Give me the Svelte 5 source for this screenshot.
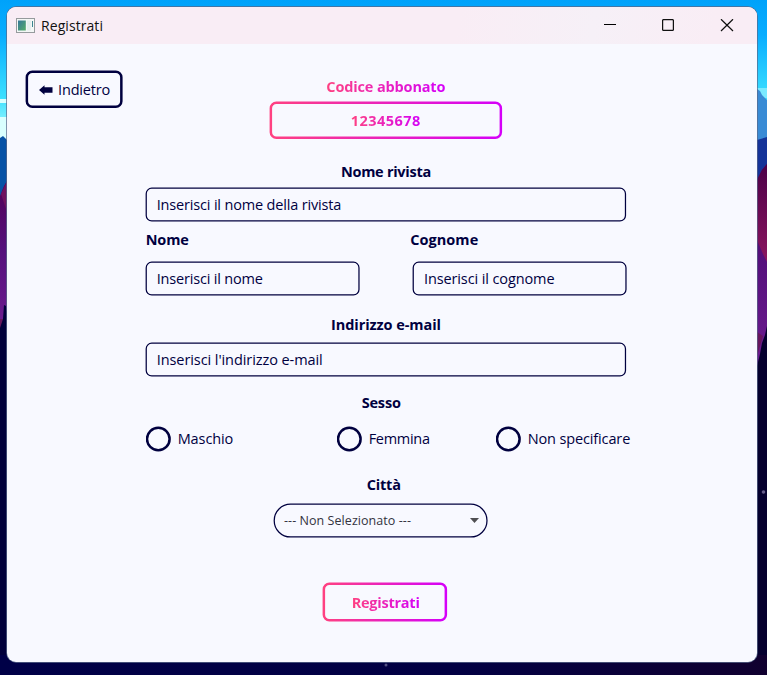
<script>
  const genders = [
    { label: 'Maschio', width: 191, text: 55.5 },
    { label: 'Femmina', width: 159, text: 61 },
    { label: 'Non specificare', width: 136, text: 102.5 }
  ];
  let gender = $state('');

  function fit(node, width) {
    const natural = node.getBoundingClientRect().width;
    const count = node.textContent.length;
    node.style.letterSpacing = `${(width - natural) / count}px`;
  }
</script>

{#snippet frame(w, h, r, s, gradient)}
  <svg class="frame" width={w} height={h} aria-hidden="true">
    {#if gradient}
      <defs>
        <linearGradient id="edge{w}" x1="0" x2="1">
          <stop offset="0" stop-color="#ff4181" />
          <stop offset="1" stop-color="#d500f9" />
        </linearGradient>
      </defs>
    {/if}
    <rect x={s / 2 - 0.4} y={s / 2 - 0.4} width={w - s} height={h - s} rx={r} fill="none"
      stroke={gradient ? `url(#edge${w})` : '#00003f'} stroke-width={s} />
  </svg>
{/snippet}

<div class="desktop">
  <svg class="scenery" width="767" height="675" aria-hidden="true">
    <defs>
      <linearGradient id="sky" x1="0" x2="0" y1="0" y2="1">
        <stop offset="0" stop-color="#00a2fa" />
        <stop offset=".25" stop-color="#08adff" />
        <stop offset=".7" stop-color="#3ce0ff" />
        <stop offset="1" stop-color="#b8ffff" />
      </linearGradient>
      <linearGradient id="violet" x1="0" x2="0" y1="0" y2="1">
        <stop offset="0" stop-color="#520057" />
        <stop offset=".45" stop-color="#55107c" />
        <stop offset="1" stop-color="#701d91" />
      </linearGradient>
      <linearGradient id="ridge" x1="0" x2="0" y1="0" y2="1">
        <stop offset="0" stop-color="#4c0048" />
        <stop offset="1" stop-color="#8b165f" />
      </linearGradient>
      <linearGradient id="night" x1="0" x2="1">
        <stop offset="0" stop-color="#000047" />
        <stop offset=".6" stop-color="#020043" />
        <stop offset="1" stop-color="#10002f" />
      </linearGradient>
    </defs>
    <rect width="767" height="140" fill="url(#sky)" />
    <path d="M0 99H7V103H0ZM0 117H7V140H0Z" fill="#d9ffff" />
    <path d="M757 88H767V98H757Z" fill="#7beaff" />
    <path d="M0 138L3 136L7 140V210H0Z" fill="#0752a6" />
    <path d="M757 89L760 91L762 95L767 100V145H757Z" fill="#398bd5" />
    <path d="M757 140L767 137V185H757Z" fill="#153398" />
    <path d="M0 196L4 186L7 181V335H0Z" fill="url(#violet)" />
    <path d="M1 194L7 181V212Z" fill="#6f1260" />
    <path d="M757 180L762 170L767 164V375H757Z" fill="url(#violet)" />
    <path d="M757 180L762 170L767 164V262L763 254L757 240Z" fill="url(#ridge)" />
    <path d="M0 319H3L2 328H0ZM757 332L763 336L757 356Z" fill="#67165d" />
    <path d="M0 328L3 319L4 305L6 306L7 312V675H0Z" fill="#01003b" />
    <path d="M757 366L760 354L762 343L765 335L767 326V675H757Z" fill="#05002e" />
    <rect y="655" width="767" height="20" fill="url(#night)" />
    <circle cx="763.5" cy="492" r="1.8" fill="#655c89" />
    <circle cx="386" cy="665" r="1.5" fill="#535184" />
  </svg>

  <main class="window">
    <header class="titlebar">
      <svg class="app-icon" width="19" height="16" viewBox="0 0 19 16">
        <defs>
          <linearGradient id="pane" x1="0" y1="0" x2="1" y2="1">
            <stop offset="0" stop-color="#35779a" />
            <stop offset="1" stop-color="#55ad69" />
          </linearGradient>
        </defs>
        <rect x=".5" y=".5" width="18" height="14" fill="#f4f7f6" stroke="#969b9d" />
        <rect x="2" y="2.5" width="7.8" height="10" fill="url(#pane)" />
        <rect x="11" y="2.5" width="4" height="10" fill="#e6eeee" />
        <path d="M16.5 3V9" stroke="#3a8590" />
      </svg>
      <h1><span use:fit={62}>Registrati</span></h1>
      <div class="controls">
        <svg width="14" height="14" viewBox="0 0 14 14"><path d="M1 5.5H13" stroke="#000" /></svg>
        <svg width="14" height="14" viewBox="0 0 14 14"><rect x="1.6" y=".6" width="10.8" height="10.8" rx="1" fill="none" stroke="#111" stroke-width="1.25" /></svg>
        <svg width="14" height="14" viewBox="0 0 14 14"><path d="M1 .2L13 12M13 .2L1 12" fill="none" stroke="#111" stroke-width="1.2" /></svg>
      </div>
    </header>

    <div class="top">
      <button class="back">
        {@render frame(97, 37.5, 5.5, 2.5, false)}
        <svg width="14" height="10" viewBox="0 0 14 10"><path d="M0 5L5.5 .3V2.3H13.5V7.7H5.5V9.7Z" fill="#00003f" /></svg>
        <span use:fit={52}>Indietro</span>
      </button>
      <section class="code">
        <div class="label"><b class="glow" use:fit={119}>Codice abbonato</b></div>
        <div class="codebox">
          {@render frame(232.5, 37.5, 5.5, 2.5, true)}
          <b class="glow" use:fit={70}>12345678</b>
        </div>
      </section>
    </div>

    <form onsubmit={(e) => e.preventDefault()}>
      <div class="label magazine"><b use:fit={90}>Nome rivista</b></div>
      <div class="input">
        {@render frame(480.5, 34, 5.5, 1.25, false)}
        <span use:fit={184.5}>Inserisci il nome della rivista</span>
      </div>
      <div class="names">
        <div class="first">
          <div class="label"><b use:fit={43}>Nome</b></div>
          <div class="input">
            {@render frame(214, 34, 5.5, 1.25, false)}
            <span use:fit={106}>Inserisci il nome</span>
          </div>
        </div>
        <div class="last">
          <div class="label"><b use:fit={68}>Cognome</b></div>
          <div class="input">
            {@render frame(214, 34, 5.5, 1.25, false)}
            <span use:fit={130.5}>Inserisci il cognome</span>
          </div>
        </div>
      </div>
      <div class="label mail"><b use:fit={110}>Indirizzo e-mail</b></div>
      <div class="input">
        {@render frame(480.5, 34, 5.5, 1.25, false)}
        <span use:fit={166}>Inserisci l'indirizzo e-mail</span>
      </div>
      <div class="label sex"><b use:fit={39}>Sesso</b></div>
      <div class="radios">
        {#each genders as g}
          <label style="width:{g.width}px">
            <input type="radio" name="gender" value={g.label} bind:group={gender} />
            <svg width="26" height="26"><circle cx="12.3" cy="13" r="11.3" fill="none" stroke="#00003f" stroke-width="2.5" />{#if gender === g.label}<circle cx="12.3" cy="13" r="5.5" fill="#00003f" />{/if}</svg>
            <span use:fit={g.text}>{g.label}</span>
          </label>
        {/each}
      </div>
      <div class="label city"><b use:fit={34}>Città</b></div>
      <div class="select">
        {@render frame(214, 34, 16.3, 1.25, false)}
        <span use:fit={127}>--- Non Selezionato ---</span>
        <svg width="9" height="5"><path d="M0 0H9L4.5 5Z" fill="#4f4f52" /></svg>
      </div>
      <button class="submit">
        {@render frame(124.5, 39, 5.5, 2.5, true)}
        <b class="glow" use:fit={68}>Registrati</b>
      </button>
    </form>
  </main>
</div>

<style>
  :global(body) { margin: 0; }
  .desktop {
    position: relative;
    box-sizing: border-box;
    width: 767px;
    height: 675px;
    padding: 7px 10px 13px 7px;
    overflow: hidden;
    background: #01003b;
    font-family: "Open Sans", "Noto Sans", sans-serif;
    font-size: 14.5px;
    line-height: 20px;
    color: #00003f;
  }
  .scenery { position: absolute; inset: 0; }
  .window {
    position: relative;
    height: 655px;
    border-radius: 9px;
    overflow: hidden;
    background: #f8f9ff;
    box-shadow: 0 0 0 .7px #59678a;
  }
  .titlebar {
    display: flex;
    align-items: center;
    height: 37px;
    padding-left: 9px;
    background: linear-gradient(100deg, #f9edf5 0 60%, #f6f0f7 78%, #f9edf5 94%);
    color: #111;
  }
  h1 { flex: 1; margin: 0 0 0 6px; font-size: 14px; font-weight: 400; line-height: 20px; }
  .controls { display: flex; gap: 44.5px; padding-right: 23.4px; }
  span, b { display: inline-block; white-space: pre; }
  b { font-weight: 700; }
  button { border: 0; padding: 0; background: none; font: inherit; color: inherit; position: relative; display: flex; align-items: center; }
  .frame { position: absolute; left: 0; top: 0; overflow: visible; }
  .top { display: flex; padding: 27px 0 0 18.6px; height: 101.6px; box-sizing: border-box; }
  .back { width: 97px; height: 37.5px; padding-left: 13.5px; gap: 5px; box-sizing: border-box; }
  .code { margin-left: 147px; width: 232.5px; padding-top: 6px; }
  .label { height: 20px; display: flex; justify-content: center; }
  .glow { color: transparent; background: linear-gradient(90deg, #ff4181, #d500f9); background-clip: text; -webkit-background-clip: text; }
  .codebox { position: relative; display: flex; justify-content: center; align-items: center; height: 37.5px; margin-top: 5px; }
  form { width: 480.5px; margin-left: 138.7px; }
  .magazine { padding-top: 16.4px; margin-bottom: 5.6px; }
  .input { position: relative; display: flex; align-items: center; height: 34px; padding-left: 11px; box-sizing: border-box; }
  .names { display: flex; padding-top: 8.4px; }
  .names .label { justify-content: flex-start; margin-bottom: 11.6px; }
  .first { width: 214px; }
  .last { width: 214px; margin-left: 54px; }
  .last .label { margin-left: -2.7px; }
  .mail { padding-top: 19px; margin-bottom: 8px; }
  .sex { padding-top: 16px; padding-right: 9.5px; }
  .radios { display: flex; width: 490px; padding-top: 13px; }
  .radios label { display: flex; align-items: center; height: 26px; gap: 6px; flex-shrink: 0; }
  .radios input { position: absolute; opacity: 0; margin: 0; }
  .city { padding-top: 23px; padding-right: 4.5px; }
  .select { position: relative; display: flex; align-items: center; justify-content: space-between; width: 214px; height: 34px; box-sizing: border-box; margin: 9.4px 0 0 128.8px; padding: 0 9px 0 9.5px; font-size: 12.5px; color: #333340; }
  .submit { width: 124.5px; height: 39px; justify-content: center; margin: 45.4px 0 0 177.7px; }
</style>
